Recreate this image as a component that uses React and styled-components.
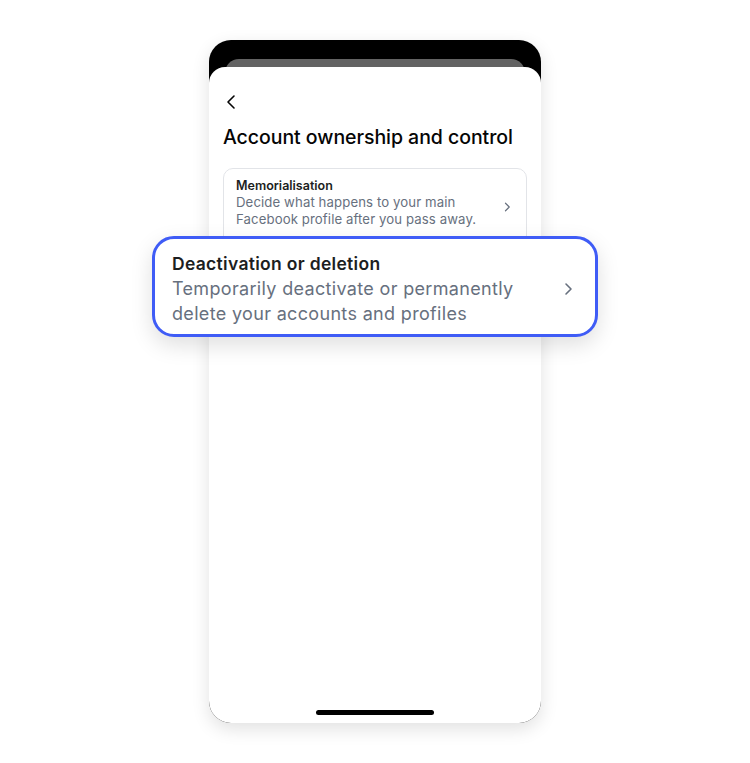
import React from 'react';
import styled, { createGlobalStyle } from 'styled-components';

const GlobalStyle = createGlobalStyle`
  html, body {
    margin: 0;
    padding: 0;
    background: #ffffff;
    font-family: Inter, "Noto Sans", "Liberation Sans", sans-serif;
  }
`;

const Stage = styled.div`
  position: relative;
  width: 750px;
  height: 763px;
  display: flex;
  justify-content: center;
  padding-top: 40px;
  box-sizing: border-box;
`;

const Phone = styled.div`
  width: 332px;
  height: 683px;
  background: #000;
  border-radius: 22px;
  overflow: hidden;
  display: flex;
  flex-direction: column;
  box-shadow: 0 6px 18px rgba(0, 0, 0, 0.12);
  padding-top: 19px;
  box-sizing: border-box;
`;

const BackSheet = styled.div`
  margin: 0 16px;
  height: 14px;
  background: #636363;
  border-radius: 14px 14px 0 0;
  flex-shrink: 0;
`;

const Sheet = styled.div`
  flex: 1;
  margin-top: -6px;
  background: #fff;
  border-radius: 16px 16px 0 0;
  display: flex;
  flex-direction: column;
  padding: 27px 14px 0;
  box-sizing: border-box;
`;

const BackButton = styled.div`
  width: 16px;
  height: 16px;
  margin-left: 1px;
  color: #050505;
`;

const Title = styled.h1`
  margin: 14px 0 0;
  font-size: 19.5px;
  font-weight: 500;
  color: #050505;
  letter-spacing: -0.05px;
  line-height: 26px;
`;

const Card = styled.div`
  margin-top: 18px;
  border: 1px solid #e2e4e8;
  border-radius: 10px;
  height: 110px;
  box-sizing: border-box;
`;

const Row = styled.div`
  display: flex;
  align-items: center;
  padding: ${p => p.$big ? '14px 20px 9px 17px' : '8px 14px 8px 12px'};
`;

const RowText = styled.div`
  flex: 1;
  display: flex;
  flex-direction: column;
`;

const RowTitle = styled.div`
  font-size: ${p => p.$big ? '17.5px' : '12.5px'};
  line-height: ${p => p.$big ? '24px' : '17px'};
  letter-spacing: ${p => p.$big ? '0.3px' : '0'};
  font-weight: 600;
  color: #1c1e21;
`;

const RowDesc = styled.div`
  font-size: ${p => p.$big ? '18px' : '13.2px'};
  line-height: ${p => p.$big ? '25px' : '17px'};
  letter-spacing: ${p => p.$big ? '0.33px' : '0.1px'};
  color: #67707e;
`;

const Chevron = styled.div`
  width: ${p => p.$big ? '14px' : '10px'};
  height: ${p => p.$big ? '16px' : '12px'};
  color: #67707e;
  flex-shrink: 0;
`;

const Spacer = styled.div`
  flex: 1;
`;

const HomeBar = styled.div`
  align-self: center;
  width: 118px;
  height: 5px;
  border-radius: 3px;
  background: #000;
  margin-bottom: 8px;
`;

const Popup = styled.div`
  position: absolute;
  left: 152px;
  top: 236px;
  width: 446px;
  height: 101px;
  box-sizing: border-box;
  border: 3px solid #3f5cf6;
  border-radius: 22px;
  background: #fff;
  box-shadow: 0 8px 22px rgba(0, 0, 0, 0.13);
  display: flex;
  flex-direction: column;
  justify-content: center;
`;

const ChevronIcon = () => (
  <svg viewBox="0 0 10 16" width="100%" height="100%" fill="none" stroke="currentColor" strokeWidth="1.6" strokeLinecap="round" strokeLinejoin="round">
    <path d="M3 3l5 5-5 5" />
  </svg>
);

const BackIcon = () => (
  <svg viewBox="0 0 16 16" width="100%" height="100%" fill="none" stroke="currentColor" strokeWidth="1.6" strokeLinecap="round" strokeLinejoin="round">
    <path d="M10 2L4 8l6 6" />
  </svg>
);

const App = () => {
  return (
    <>
      <GlobalStyle />
      <Stage>
        <Phone>
          <BackSheet />
          <Sheet>
            <BackButton><BackIcon /></BackButton>
            <Title>Account ownership and control</Title>
            <Card>
              <Row>
                <RowText>
                  <RowTitle>Memorialisation</RowTitle>
                  <RowDesc>Decide what happens to your main<br />Facebook profile after you pass away.</RowDesc>
                </RowText>
                <Chevron><ChevronIcon /></Chevron>
              </Row>
            </Card>
            <Spacer />
            <HomeBar />
          </Sheet>
        </Phone>
        <Popup>
          <Row $big>
            <RowText>
              <RowTitle $big>Deactivation or deletion</RowTitle>
              <RowDesc $big>Temporarily deactivate or permanently<br />delete your accounts and profiles</RowDesc>
            </RowText>
            <Chevron $big><ChevronIcon /></Chevron>
          </Row>
        </Popup>
      </Stage>
    </>
  );
};

export default App;
